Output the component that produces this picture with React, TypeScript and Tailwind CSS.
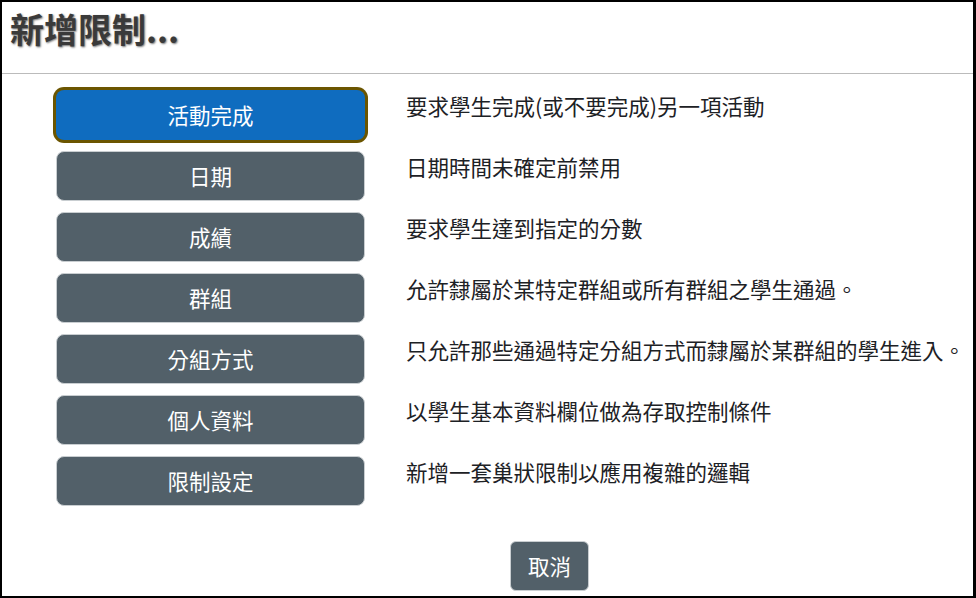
const OPTIONS: { label: string; desc: string }[] = [
  { label: '活動完成', desc: '要求學生完成(或不要完成)另一項活動' },
  { label: '日期', desc: '日期時間未確定前禁用' },
  { label: '成績', desc: '要求學生達到指定的分數' },
  { label: '群組', desc: '允許隸屬於某特定群組或所有群組之學生通過。' },
  { label: '分組方式', desc: '只允許那些通過特定分組方式而隸屬於某群組的學生進入。' },
  { label: '個人資料', desc: '以學生基本資料欄位做為存取控制條件' },
  { label: '限制設定', desc: '新增一套巢狀限制以應用複雜的邏輯' },
];

const FONT = "font-['Microsoft_JhengHei','Noto_Sans_CJK_TC',sans-serif]";

function OptionRow({ label, desc, active }: { label: string; desc: string; active: boolean }) {
  return (
    <li className="flex items-start">
      <button
        className={`h-[50px] w-[309px] shrink-0 rounded-lg text-[21.5px] text-white ${
          active
            ? 'bg-[#0f6cbf] shadow-[0_0_0_3px_#6b5500]'
            : 'border border-[#c9ced1] bg-[#526069]'
        }`}
      >
        {label}
      </button>
      <p className="ml-[41px] pt-[3px] text-[21.5px] leading-[26px] text-[#1d2125]">{desc}</p>
    </li>
  );
}

export default function App() {
  return (
    <div
      className={`flex h-[598px] w-[976px] flex-col border-t-2 border-r-[3px] border-b-2 border-l-2 border-black bg-white ${FONT}`}
    >
      <header className="flex h-[72px] items-center border-b border-[#bbbbbb] pl-[8px] pb-[18px]">
        <h2 className="text-[34px] leading-none font-bold text-[#3a3a3a] [text-shadow:1px_1px_2px_rgba(0,0,0,0.55)]">
          新增限制...
        </h2>
      </header>

      <ul className="flex flex-col gap-[11px] pt-[16px] pl-[54px]">
        {OPTIONS.map((o, i) => (
          <OptionRow key={o.label} label={o.label} desc={o.desc} active={i === 0} />
        ))}
      </ul>

      <div className="pt-[35px] pl-[508px]">
        <button className="h-[50px] w-[79px] rounded-md border border-[#c9ced1] bg-[#526069] text-[21.5px] text-white">
          取消
        </button>
      </div>
    </div>
  );
}
